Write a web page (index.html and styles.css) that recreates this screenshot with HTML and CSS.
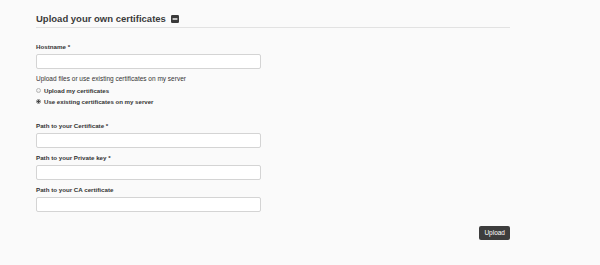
FILE: index.html
```html
<!DOCTYPE html>
<html lang="en">
<head>
    <meta charset="UTF-8">
    <meta name="viewport" content="width=device-width, initial-scale=1.0">
    <title>Upload your own certificates</title>
    <link rel="stylesheet" href="styles.css">
</head>
<body>

    <div id="container">
        <h2 class="section-title">
            Upload your own certificates
            <svg class="toggle-icon" width="8" height="8" viewBox="0 0 8 8">
                <rect x="0" y="0" width="8" height="8" rx="1.2" fill="#3a3a3a"/>
                <rect x="1.6" y="3.3" width="4.8" height="1.4" fill="#fff"/>
            </svg>
        </h2>

        <form id="certForm">
            <div class="field">
                <label for="hostname">Hostname *</label>
                <input type="text" id="hostname" name="hostname">
            </div>

            <div class="source">
                <p class="source-title">Upload files or use existing certificates on my server</p>
                <label class="radio"><input type="radio" name="source" value="upload"> Upload my certificates</label>
                <label class="radio"><input type="radio" name="source" value="server" checked> Use existing certificates on my server</label>
            </div>

            <div class="field">
                <label for="certPath">Path to your Certificate *</label>
                <input type="text" id="certPath" name="cert">
            </div>
            <div class="field">
                <label for="keyPath">Path to your Private key *</label>
                <input type="text" id="keyPath" name="key">
            </div>
            <div class="field">
                <label for="caPath">Path to your CA certificate</label>
                <input type="text" id="caPath" name="ca">
            </div>

            <div class="actions">
                <button type="button">Upload</button>
            </div>
        </form>
    </div>

</body>
</html>
```

FILE: styles.css
```css
body {
    margin: 0;
    background-color: #fafafa;
    font-family: "Liberation Sans", Arial, sans-serif;
    color: #333;
}

#container {
    width: 474px;
    margin-left: 36px;
}

h2.section-title {
    margin: 13px 0 0;
    padding-bottom: 2px;
    font-size: 9.5px;
    line-height: 12px;
    font-weight: bold;
    color: #3a3a3a;
    border-bottom: 1px solid #e2e2e2;
}

h2.section-title .toggle-icon {
    margin-left: 2px;
    vertical-align: -1px;
}

form#certForm {
    padding-top: 15px;
}

form#certForm .field {
    margin-bottom: 6px;
}

form#certForm .field label {
    display: block;
    margin-bottom: 3px;
    font-size: 6.2px;
    line-height: 8px;
    font-weight: bold;
}

form#certForm input[type="text"] {
    display: block;
    box-sizing: border-box;
    width: 225px;
    height: 15px;
    margin: 0;
    padding: 0 4px;
    border: 1px solid #d4d4d4;
    border-radius: 2px;
    background-color: #fff;
}

form#certForm .source {
    margin-top: 3px;
    margin-bottom: 15px;
}

form#certForm .source-title {
    margin: 0 0 2px;
    font-size: 6.5px;
    line-height: 8px;
}

form#certForm label.radio {
    display: flex;
    align-items: center;
    height: 11px;
    font-size: 6.1px;
    font-weight: bold;
}

form#certForm label.radio input {
    -webkit-appearance: none;
    appearance: none;
    box-sizing: border-box;
    width: 5px;
    height: 5px;
    margin: 0 3px 0 0;
    border: 1px solid #b5b5b5;
    border-radius: 50%;
    background: linear-gradient(#fdfdfd, #e6e6e6);
}

form#certForm label.radio input:checked {
    border-color: #8a8a8a;
    background: radial-gradient(circle, #444 0, #444 1.2px, #e8e8e8 1.4px);
}

form#certForm .actions {
    display: flex;
    justify-content: flex-end;
    padding-top: 8px;
}

form#certForm .actions button {
    height: 14px;
    padding: 0 5px;
    border: none;
    border-radius: 2px;
    background-color: #3d3d3d;
    color: #fff;
    font-family: "Liberation Sans", Arial, sans-serif;
    font-size: 6.5px;
    line-height: 14px;
    cursor: pointer;
}
```
